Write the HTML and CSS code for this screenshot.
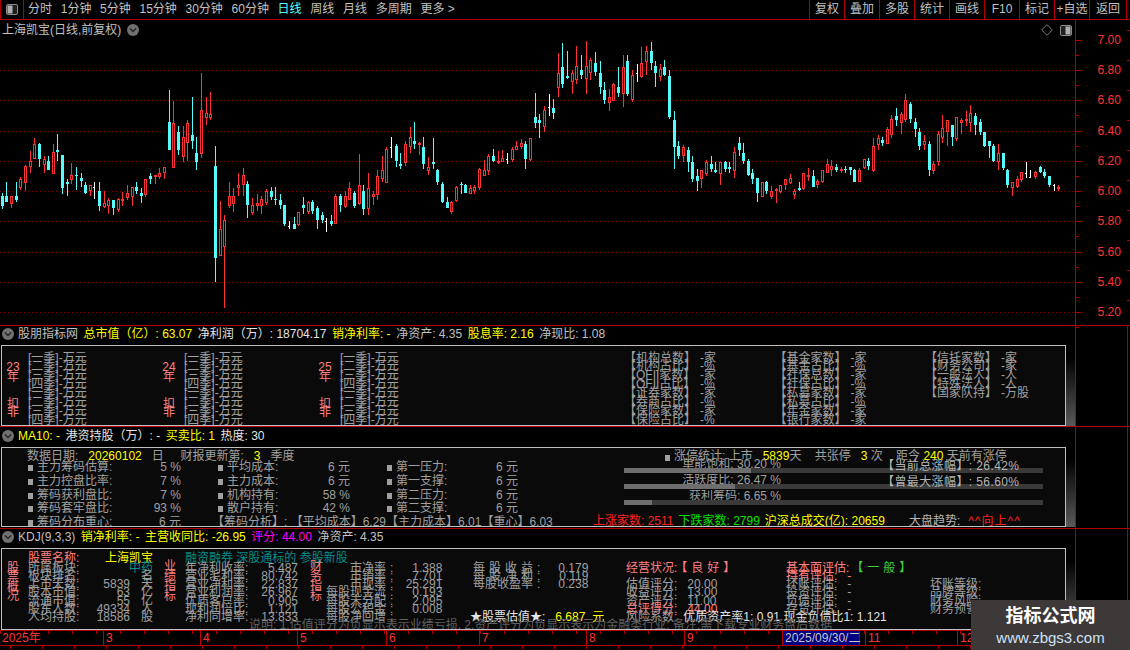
FILE: index.html
```html
<!DOCTYPE html>
<html lang="zh">
<head>
<meta charset="utf-8">
<title>上海凯宝</title>
<link rel="stylesheet" href="styles.css">
</head>
<body>
<div class="app">
  <header class="toolbar">
    <div class="toggle-cell">
      <svg class="toggle" viewBox="0 0 12 11"><rect class="toggle-frame" x="0.5" y="0.5" width="11" height="10" rx="1.5"/><rect class="toggle-half" x="1.5" y="1.5" width="5" height="8"/></svg>
    </div>
    <nav class="periods">
      <span>分时</span><span>1分钟</span><span>5分钟</span><span>15分钟</span><span>30分钟</span><span>60分钟</span><span class="is-active">日线</span><span>周线</span><span>月线</span><span>多周期</span><span>更多 &gt;</span>
    </nav>
    <nav class="tools">
      <span>复权</span><span>叠加</span><span>多股</span><span>统计</span><span>画线</span><span>F10</span><span>标记</span><span>+自选</span><span class="tool-last">返回</span>
    </nav>
  </header>

  <section class="pane pane-chart">
    <div class="chart">
      <div class="chart-title">上海凯宝(日线,前复权)
        <svg class="chev" viewBox="0 0 12 12"><circle class="chev-bg" cx="6" cy="6" r="6"/><path class="chev-mark" d="M3 4.5 6 7.5 9 4.5"/></svg>
      </div>
      <div class="chart-tools">
        <svg class="diamond" viewBox="0 0 12 12"><path d="M6 .7 11.3 6 6 11.3 .7 6Z"/></svg>
        <svg class="toggle" viewBox="0 0 12 11"><rect class="toggle-frame" x="0.5" y="0.5" width="11" height="10" rx="1.5"/><rect class="toggle-half" x="5.5" y="1.5" width="5" height="8"/></svg>
      </div>
      <svg id="candles" class="candles" width="1075" height="305" viewBox="0 0 1075 305">
        <g class="grid">
          <line x1="0" x2="1075" y1="50.5" y2="50.5"/><line x1="0" x2="1075" y1="80.5" y2="80.5"/><line x1="0" x2="1075" y1="111.5" y2="111.5"/><line x1="0" x2="1075" y1="141.5" y2="141.5"/><line x1="0" x2="1075" y1="171.5" y2="171.5"/><line x1="0" x2="1075" y1="201.5" y2="201.5"/><line x1="0" x2="1075" y1="232.5" y2="232.5"/><line x1="0" x2="1075" y1="262.5" y2="262.5"/><line x1="0" x2="1075" y1="292.5" y2="292.5"/>
        </g>
      </svg>
    </div>
    <div class="side price-axis">
      <div class="price">7.00</div><div class="price">6.80</div><div class="price">6.60</div><div class="price">6.40</div><div class="price">6.20</div><div class="price">6.00</div><div class="price">5.80</div><div class="price">5.60</div><div class="price">5.40</div><div class="price">5.20</div>
    </div>
  </section>

  <section class="pane pane-finance">
    <div class="pane-main">
      <div class="pane-head">
        <svg class="chev" viewBox="0 0 12 12"><circle class="chev-bg" cx="6" cy="6" r="6"/><path class="chev-mark" d="M3 4.5 6 7.5 9 4.5"/></svg>
        <span class="soft">股朋指标网</span><span class="yel">总市值（亿）: 63.07</span><span class="wht">净利润（万）: 18704.17</span><span class="yel">销净利率: -</span><span class="soft">净资产: 4.35</span><span class="yel">股息率: 2.16</span><span class="soft">净现比: 1.08</span>
      </div>
      <div class="panel-row">
        <div class="box box-finance">
          <div class="fin-group">
            <div class="fin-label"><span class="fin-year">23<br>年</span><span class="fin-net">扣<br>非</span></div>
            <div class="rows"><div>[一季]-万元</div><div>[二季]-万元</div><div>[三季]-万元</div><div>[四季]-万元</div><div>[一季]-万元</div><div>[二季]-万元</div><div>[三季]-万元</div><div>[四季]-万元</div></div>
          </div>
          <div class="fin-group">
            <div class="fin-label"><span class="fin-year">24<br>年</span><span class="fin-net">扣<br>非</span></div>
            <div class="rows"><div>[一季]-万元</div><div>[二季]-万元</div><div>[三季]-万元</div><div>[四季]-万元</div><div>[一季]-万元</div><div>[二季]-万元</div><div>[三季]-万元</div><div>[四季]-万元</div></div>
          </div>
          <div class="fin-group">
            <div class="fin-label"><span class="fin-year">25<br>年</span><span class="fin-net">扣<br>非</span></div>
            <div class="rows"><div>[一季]-万元</div><div>[二季]-万元</div><div>[三季]-万元</div><div>[四季]-万元</div><div>[一季]-万元</div><div>[二季]-万元</div><div>[三季]-万元</div><div>[四季]-万元</div></div>
          </div>
          <div class="holders holders-first">
            <div class="holder"><span>【机构总数】</span><span>-家</span></div><div class="holder"><span>【机构占比】</span><span>-%</span></div><div class="holder"><span>【QFII家数】</span><span>-家</span></div><div class="holder"><span>【QFII占比】</span><span>-%</span></div><div class="holder"><span>【证券家数】</span><span>-家</span></div><div class="holder"><span>【券商占比】</span><span>-%</span></div><div class="holder"><span>【保险家数】</span><span>-家</span></div><div class="holder"><span>【保险占比】</span><span>-%</span></div>
          </div>
          <div class="holders">
            <div class="holder"><span>【基金家数】</span><span>-家</span></div><div class="holder"><span>【基金占比】</span><span>-%</span></div><div class="holder"><span>【社保总数】</span><span>-家</span></div><div class="holder"><span>【社保占比】</span><span>-%</span></div><div class="holder"><span>【私募家数】</span><span>-家</span></div><div class="holder"><span>【私募占比】</span><span>-%</span></div><div class="holder"><span>【年金家数】</span><span>-家</span></div><div class="holder"><span>【银行家数】</span><span>-家</span></div>
          </div>
          <div class="holders">
            <div class="holder"><span>【信托家数】</span><span>-家</span></div><div class="holder"><span>【财务公司】</span><span>-家</span></div><div class="holder"><span>【一般法人】</span><span>-人</span></div><div class="holder"><span>【特殊法人】</span><span>-人</span></div><div class="holder"><span>【国家队持】</span><span>-万股</span></div>
          </div>
        </div>
        <div class="edge"></div>
      </div>
    </div>
    <div class="side side-lower"></div>
  </section>

  <section class="pane pane-chips">
    <div class="pane-main">
      <div class="pane-head">
        <svg class="chev" viewBox="0 0 12 12"><circle class="chev-bg" cx="6" cy="6" r="6"/><path class="chev-mark" d="M3 4.5 6 7.5 9 4.5"/></svg>
        <span class="yel">MA10: -</span><span class="wht">港资持股（万）: -</span><span class="yel">买卖比: 1</span><span class="wht">热度: 30</span>
      </div>
      <div class="panel-row">
        <div class="box box-chips">
          <div class="chips">
            <div class="chips-top">数据日期:   <b class="yel">20260102</b>   日     财报更新第:   <b class="yel">3</b>   季度</div>
            <div class="stats">
              <div class="stat"><span class="stat-name">主力筹码估算:</span><span>5 %</span></div>
              <div class="stat"><span class="stat-name">平均成本:</span><span>6 元</span></div>
              <div class="stat"><span class="stat-name">第一压力:</span><span>6 元</span></div>
              <div class="stat"><span class="stat-name">主力控盘比率:</span><span>7 %</span></div>
              <div class="stat"><span class="stat-name">主力成本:</span><span>6 元</span></div>
              <div class="stat"><span class="stat-name">第一支撑:</span><span>6 元</span></div>
              <div class="stat"><span class="stat-name">筹码获利盘比:</span><span>7 %</span></div>
              <div class="stat"><span class="stat-name">机构持有:</span><span>58 %</span></div>
              <div class="stat"><span class="stat-name">第二压力:</span><span>6 元</span></div>
              <div class="stat"><span class="stat-name">筹码套牢盘比:</span><span>93 %</span></div>
              <div class="stat"><span class="stat-name">散户持有:</span><span>42 %</span></div>
              <div class="stat"><span class="stat-name">第二支撑:</span><span>6 元</span></div>
              <div class="stat"><span class="stat-name">筹码分布重心:</span><span>6 元</span></div>
              <div class="analysis">【筹码分析】: 【平均成本】6.29【主力成本】6.01【重心】6.03</div>
            </div>
          </div>
          <div class="market">
            <div class="limit"><i class="dot"></i>涨停统计: 上市   <b class="yel">5839</b>天    共张停   <b class="yel">3</b> 次    距今 <b class="yel">240</b> 天前有涨停</div>
            <div class="meter"><div class="meter-label">单能饱和: 30.20 %</div><div class="bar"><div class="bar-fill" style="width:30.3%"></div></div></div>
            <div class="meter"><div class="meter-label">活跃度比: 26.47 %</div><div class="bar"><div class="bar-fill" style="width:26.5%"></div></div></div>
            <div class="meter"><div class="meter-label">获利筹码: 6.65 %</div><div class="bar"><div class="bar-fill" style="width:6.65%"></div></div></div>
            <div class="gain gain-now">【当前总涨幅】: 26.42%</div>
            <div class="gain gain-max">【曾最大涨幅】: 56.60%</div>
            <div class="breadth"><span class="up">上涨家数: 2511</span><span class="down">下跌家数: 2799</span><span class="yel">沪深总成交(亿): 20659</span><span class="trend">大盘趋势:</span><span class="up wide">^^向上^^</span></div>
          </div>
        </div>
        <div class="edge"></div>
      </div>
    </div>
    <div class="side side-lower"></div>
  </section>

  <section class="pane pane-profile">
    <div class="pane-main">
      <div class="pane-head head-low">
        <svg class="chev" viewBox="0 0 12 12"><circle class="chev-bg" cx="6" cy="6" r="6"/><path class="chev-mark" d="M3 4.5 6 7.5 9 4.5"/></svg>
        <span class="soft">KDJ(9,3,3)</span><span class="yel">销净利率: -</span><span class="yel">主营收同比: -26.95</span><span class="mag">评分: 44.00</span><span class="soft">净资产: 4.35</span>
      </div>
      <div class="panel-row">
        <div class="box box-profile">
          <div class="vlabel vlabel-a">股<br>票<br>概<br>况</div>
          <div class="col col-basic">
            <div class="col-head"><span class="pink">股票名称:</span><span class="yel">上海凯宝</span></div>
            <div class="r"><span>所属板块:</span><span class="teal">中药</span></div>
            <div class="r"><span>板块排名:</span><span class="unit">名</span></div>
            <div class="r"><span>上市天数:</span><span>5839</span><span class="unit">天</span></div>
            <div class="r"><span>股本市值:</span><span>63</span><span class="unit">亿</span></div>
            <div class="r"><span>流通市值:</span><span>55</span><span class="unit">亿</span></div>
            <div class="r"><span>股东人数:</span><span>49334</span><span class="unit">人</span></div>
            <div class="r"><span>人均持股:</span><span>18586</span><span class="unit">股</span></div>
          </div>
          <div class="vlabel vlabel-b">业<br>绩<br>指<br>标</div>
          <div class="col col-perf">
            <div class="col-head"><span class="teal tags">融资融券 深股通标的 参股新股</span></div>
            <div class="r"><span>年净利收率:</span><span>5.487</span></div>
            <div class="r"><span>营业毛利率:</span><span>80.742</span></div>
            <div class="r"><span>营业净利率:</span><span>22.837</span></div>
            <div class="r"><span>营业利润率:</span><span>26.967</span></div>
            <div class="r"><span>优质客户率:</span><span>0.905</span></div>
            <div class="r"><span>现利润倍比:</span><span>1.121</span></div>
            <div class="r"><span>净利同增率:</span><span>13.833</span></div>
          </div>
          <div class="vlabel vlabel-c">财<br>务<br>指<br>标</div>
          <div class="col col-value">
            <div class="col-head"></div>
            <div class="r"><span class="rk">市净率</span><span>:</span><span class="rv">1.388</span></div>
            <div class="r"><span class="rk">市销率</span><span>:</span><span class="rv">7.701</span></div>
            <div class="r"><span class="rk">市现率</span><span>:</span><span class="rv">25.291</span></div>
            <div class="r"><span class="rk">每股现金流</span><span>:</span><span class="rv">0.193</span></div>
            <div class="r"><span class="rk">每股未分配</span><span>:</span><span class="rv">2.095</span></div>
            <div class="r"><span class="rk">每股公积金</span><span>:</span><span class="rv">0.008</span></div>
            <div class="r"><span class="rk">每股净回增</span><span>:</span></div>
          </div>
          <div class="col col-share">
            <div class="col-head"></div>
            <div class="r"><span class="rk rk-just">每股收益</span><span>:</span><span class="rv">0.179</span></div>
            <div class="r"><span class="rk rk-just">每股净利</span><span>:</span><span class="rv">0.119</span></div>
            <div class="r"><span class="rk">每股收盈率</span><span>:</span><span class="rv">0.238</span></div>
            <div class="r"></div><div class="r"></div><div class="r"></div>
            <div class="r worth"><span class="wht">★股票估值★:</span><span class="yel rv">6.687</span><span class="yel worth-unit">元</span></div>
          </div>
          <div class="col col-state">
            <div class="col-head"></div>
            <div class="r"><span class="pink">经营状况:</span><span class="pink tag-after">【良好】</span></div>
            <div class="r"></div>
            <div class="r"><span>估值评分:</span><span class="score">20.00</span></div>
            <div class="r"><span>收益评分:</span><span class="score">13.00</span></div>
            <div class="r"><span>资产评分:</span><span class="score">11.00</span></div>
            <div class="r pink"><span>总评得分:</span><span class="score">44.00</span></div>
            <div class="r"><span>风险系数:</span><span class="wht ratio">优质资产率1: 0.91 现金负债比1: 1.121</span></div>
          </div>
          <div class="col col-base">
            <div class="col-head"></div>
            <div class="r"><span class="pink">基本面评估:</span><span class="green tag-after">【一般】</span></div>
            <div class="r pink"><span>持有评估:</span><span class="score">-</span></div>
            <div class="r"><span>坏账评估:</span><span class="score">-</span></div>
            <div class="r"><span>投资评估:</span><span class="score">-</span></div>
            <div class="r"><span>负债评估:</span><span class="score">-</span></div>
            <div class="r"><span>存货评估:</span><span class="score">-</span></div>
          </div>
          <div class="col col-grade">
            <div class="col-head"></div>
            <div class="r"></div><div class="r"></div>
            <div class="r"><span>坏账等级:</span></div>
            <div class="r"><span>品牌等级:</span></div>
            <div class="r"><span>财务风险:</span></div>
            <div class="r"><span>财务预警:</span></div>
          </div>
          <div class="note">说明: 1.估值评分为负显示表示业绩亏损, 2.资产评分为负显示表示为金融类行业; 备注:需下载专业财务盘后数据</div>
        </div>
        <div class="edge"></div>
      </div>
    </div>
    <div class="side side-lower"></div>
  </section>

  <footer class="time-row">
    <div class="time-axis">
      <span class="t t-year">2025年</span><span class="t t-3">3</span><span class="t t-4">4</span><span class="t t-5">5</span><span class="t t-6">6</span><span class="t t-7">7</span><span class="t t-8">8</span><span class="t t-9">9</span><span class="t t-date">2025/09/30/二</span><span class="t t-11">11</span><span class="t t-12">12</span>
    </div>
    <div class="side side-time"></div>
  </footer>
  <div class="tail"></div>

  <aside class="watermark">
    <div class="wm-name">指标公式网</div>
    <div class="wm-url">www.zbgs3.com</div>
  </aside>
</div>
<script src="chart.js"></script>
</body>
</html>
```

FILE: styles.css
```css
* { box-sizing: border-box; }
html, body { margin: 0; padding: 0; background: #000; }
body { overflow: hidden; }
.app {
  position: relative;
  width: 1130px;
  height: 650px;
  overflow: hidden;
  display: flex;
  flex-direction: column;
  background: #000;
  color: #c0c0c0;
  font: 12px/14px "Liberation Sans", "Noto Sans CJK SC", sans-serif;
  white-space: nowrap;
}
b { font-weight: normal; }
.yel { color: #ffff00; }
.wht { color: #e4e4e4; }
.soft { color: #c0c0c0; }
.mag { color: #ff00ff; }
.pink { color: #ff8080; }
.teal { color: #008c8c; }
.green { color: #40d040; }
.up { color: #ff2020; }
.down { color: #00e000; }

/* toolbar */
.toolbar {
  flex: none;
  height: 20px;
  display: flex;
  border-bottom: 1px solid #b00000;
}
.toggle-cell {
  width: 24px;
  border-left: 1px solid #b00000;
  border-right: 1px solid #b00000;
  display: flex;
  align-items: center;
  justify-content: center;
  padding-bottom: 1px;
}
.toggle { width: 12px; height: 11px; display: block; }
.toggle-frame { fill: #202020; stroke: #8a8a8a; }
.toggle-half { fill: #b0b0b0; }
.periods {
  display: flex;
  gap: 8.7px;
  padding-left: 4px;
  line-height: 19px;
}
.is-active { color: #55ffff; }
.tools {
  margin-left: auto;
  display: flex;
  margin-right: 3px;
  border-right: 1px solid #b00000;
}
.tools span {
  width: 35px;
  text-align: center;
  line-height: 19px;
  border-left: 1px solid #b00000;
}
.tools .tool-last { width: 37px; }

/* panes */
.pane { flex: none; display: flex; border-bottom: 1px solid #b00000; }
.pane-chart { height: 306px; }
.pane-finance { height: 101px; }
.pane-chips { height: 102px; }
.pane-profile { height: 102px; }
.pane-main { width: 1075px; flex: none; }
.side {
  flex: 1;
  border-left: 1px solid #b00000;
  background: linear-gradient(#b00000 1px, transparent 1px) right 10px / 3px 30px repeat-y;
}
.side-lower {
  margin-right: 2px;
  border-right: 1px solid #b00000;
  background: none;
}

.chart { position: relative; width: 1075px; flex: none; }
.candles { display: block; }
.grid line { stroke: #800000; stroke-width: 1; stroke-dasharray: 1 3; }
.k-c { fill: #54fcfc; }
.k-r { fill: #ff3232; }
.k-w { fill: #fff; }
.k-rb { fill: #000; stroke: #ff3232; stroke-width: 1; }
.chart-title {
  position: absolute;
  left: 2px;
  top: 3px;
  display: flex;
  align-items: center;
  gap: 6px;
}
.chev { width: 12px; height: 12px; flex: none; display: block; }
.chev-bg { fill: #707070; }
.chev-mark { fill: none; stroke: #262626; stroke-width: 1.5; }
.chart-tools {
  position: absolute;
  right: 3px;
  top: 4px;
  display: flex;
  align-items: center;
  gap: 7px;
}
.diamond { width: 12px; height: 12px; display: block; }
.diamond path { fill: none; stroke: #777; }

.price-axis { padding-top: 4.9px; }
.price {
  position: relative;
  height: 30.25px;
  line-height: 30.25px;
  padding-left: 21.5px;
  color: #ff3232;
}
.price::before, .price::after {
  content: "";
  position: absolute;
  left: 0;
  height: 1px;
  background: #b00000;
}
.price::before { top: 15px; width: 5px; }
.price::after { top: 30px; width: 3px; }

.pane-head {
  height: 19px;
  display: flex;
  gap: 5.5px;
  padding: 1px 0 0 2px;
  align-items: flex-start;
}
.pane-head .chev { margin: 1px -1.5px 0 0; }
.pane-chips .pane-head { height: 20px; padding-top: 2px; }
.panel-row { display: flex; padding-left: 1px; }
.box {
  position: relative;
  width: 1065px;
  height: 81px;
  border: 1px solid #c0c0c0;
  background: #0a0a0a;
  color: #a0a0a0;
  overflow: hidden;
  display: flex;
}
.pane-chips .box { height: 80px; }
.pane-profile .box { height: 82px; }
.edge {
  width: 9px;
  background: linear-gradient(#000 15%, #5a5a5a 100%);
}

/* finance box */
.box-finance { padding: 7.5px 0 0 4px; }
.fin-group { width: 156px; flex: none; display: flex; }
.fin-label {
  width: 22px;
  flex: none;
  color: #ff8080;
  line-height: 10px;
  display: flex;
  flex-direction: column;
}
.fin-year, .fin-net { display: block; width: 14px; text-align: center; }
.fin-year { margin-top: 8.5px; }
.fin-net { margin-top: 18px; line-height: 8px; }
.rows > div { height: 8.9px; line-height: 8.9px; }
.holders { width: 150.5px; flex: none; }
.holders-first { margin-left: 150px; }
.holder { display: flex; height: 8.9px; line-height: 8.9px; }
.holder span:first-child { width: 76px; flex: none; }

/* chips box */
.chips { width: 590px; flex: none; padding: 2px 0 0 25px; }
.chips-top { height: 12px; line-height: 12px; white-space: pre; }
.stats {
  display: grid;
  grid-template-columns: 153px 132px 131px;
  column-gap: 37px;
  grid-auto-rows: 13.65px;
  margin-top: -0.6px;
  margin-left: 1px;
  line-height: 13.65px;
}
.stat { display: flex; align-items: center; }
.stat::before, .dot {
  content: "";
  display: inline-block;
  flex: none;
  width: 5px;
  height: 6px;
  margin-right: 4px;
  background: #a0a0a0;
}
.stat-name { flex: 1; }
.analysis { grid-column: span 2; margin-left: -6px; }
.market { position: relative; flex: 1; padding-top: 2px; }
.limit { height: 12px; line-height: 12px; padding-left: 73px; white-space: pre; }
.limit .dot { vertical-align: -1px; }
.meter { width: 419px; margin-left: 32px; height: 16.2px; }
.limit + .meter { margin-top: -4px; }
.meter-label {
  width: 157px;
  height: 9.6px;
  overflow: hidden;
  line-height: 12px;
  text-align: right;
}
.bar { height: 5.5px; background: #3a3a3a; }
.bar-fill { height: 100%; background: #6e6e6e; }
.gain { position: absolute; left: 290px; line-height: 14px; color: #b4b4b4; letter-spacing: 0.4px; }
.gain-now { top: 11px; }
.gain-max { top: 27px; }
.breadth {
  display: flex;
  gap: 5px;
  padding-left: 1px;
  margin-top: 7.4px;
  line-height: 14px;
}
.trend { margin-left: 19px; color: #b4b4b4; }
.wide { margin-left: 3px; letter-spacing: 1px; }

/* profile box */
.box-profile { padding: 2.5px 0 0 0; }
.vlabel {
  flex: none;
  padding-top: 12px;
  line-height: 9.5px;
  color: #ff8080;
}
.vlabel-a { width: 26px; padding-left: 5px; }
.vlabel-b { width: 21px; padding-top: 9.5px; line-height: 10px; }
.vlabel-c { width: 16px; padding-top: 9.5px; line-height: 10px; }
.col { flex: none; }
.col-head { height: 12.4px; line-height: 12px; display: flex; justify-content: space-between; }
.r { display: flex; height: 8.2px; line-height: 8.2px; }
.col-basic { width: 125px; margin-right: 11px; }
.col-basic .r > :first-child { margin-right: auto; }
.unit { width: 12px; margin-left: 11px; }
.col-perf { width: 113px; margin-right: 12px; }
.col-perf .r { justify-content: space-between; }
.col-value { width: 147px; }
.col-share { width: 153px; }
.rk { width: 60px; text-align: right; margin-right: 4px; }
.rk-just { text-align: justify; text-align-last: justify; }
.col-value .rv { width: 49px; text-align: right; }
.col-share .rv { width: 48px; text-align: right; }
.worth { margin-left: -3px; }
.worth .rv { margin-left: 10px; width: 30px; }
.worth-unit { margin-left: 7px; }
.col-state { width: 160px; }
.col-base { width: 144px; }
.tag-after { margin-left: -2px; letter-spacing: 4px; }
.score { margin-left: 10px; }
.ratio { margin-left: 6px; }
.col-base .tag-after { margin-left: 2px; }
.note {
  position: absolute;
  left: 247px;
  top: 69px;
  line-height: 14px;
  color: #606060;
}

/* time axis */
.time-row { flex: none; height: 15px; display: flex; border-bottom: 1px solid #b00000; }
.time-axis {
  width: 1075px;
  flex: none;
  display: grid;
  grid-template-columns: 103px 97px 97px 89px 93px 107px 98px 98px 78px 5px 92px 1fr;
  grid-template-rows: 14px;
  line-height: 14px;
  color: #ff3232;
  background: linear-gradient(90deg, #b00000 1px, transparent 1px) 0 0 / 24px 3px repeat-x;
}
.t { padding-left: 2px; border-left: 1px solid #c00000; }
.t-year { padding-left: 2px; border-left: 0; }
.t-date {
  grid-column: 9 / 11;
  background: #000080;
  color: #c8c8c8;
  border: 1px solid #b00000;
  border-top: 0;
  border-bottom: 0;
  padding-left: 2px;
  margin-right: 5px;
}
.t-11 { grid-column: 11; }
.side-time { margin-right: 2px; border-right: 1px solid #b00000; background: none; }
.tail {
  flex: 1;
  background: linear-gradient(90deg, #b00000 1px, transparent 1px) 10px 0 / 32px 3px repeat-x;
}

/* watermark */
.watermark {
  position: absolute;
  left: 971px;
  top: 600px;
  width: 159px;
  height: 50px;
  background: #3d3939;
  text-align: center;
}
.wm-name {
  margin-top: 6px;
  font-size: 18px;
  line-height: 20px;
  font-weight: 700;
  color: #fff;
}
.wm-url {
  margin-top: 2px;
  font-size: 15px;
  line-height: 20px;
  color: #cfe2f5;
}
```

FILE: chart.js
```js
// Candles as: type, x, wick top, wick bottom, body top, body bottom
// measured at 3x from the chart; each block has its own origin.
var blocks = [
  { x0: 0, y0: 40, s: "c7,460,507,468,498 c19,427,486,468,486 r34,468,503,469,491 c49,427,486,468,480 r61,411,450,417,444 r76,376,454,379,428 r91,334,399,364,381 r103,294,358,313,356 c118,309,381,312,356 r133,349,399,358,374 c145,348,390,363,390 r160,312,402,337,401 c172,282,363,330,336 c187,345,462,345,444 c202,418,468,426,432 r214,369,432,405,419 c229,381,450,405,408 c244,400,441,414,423 c256,427,462,435,459 r271,435,468,436,452 w283,427,477,442,444 c298,427,513,453,498 r313,454,504,490,501 r325,474,522,481,497 c340,480,525,480,504 r355,474,516,478,510 r367,456,498,477,483 r382,435,480,460,473 r397,441,498,442,470 c409,426,462,442,453 c424,444,489,459,468 r436,417,471,418,464 c451,400,432,408,417 r466,405,432,405,411 r478,384,417,400,411 r493,381,417,382,400 c508,151,330,246,330 r520,183,384,250,383 c535,258,345,276,330 r550,258,366,291,350 r562,240,363,250,310 c577,171,327,285,303 c589,291,390,339,366 r604,99,354,211,341 r619,171,255,220,234 r631,156,240,222,234 c646,318,726,378,654 r661,483,648,568,647 r673,525,804,541,620 r688,426,504,468,498 r700,444,516,468,491 r715,399,468,435,444 r730,384,468,406,434 c742,423,534,432,495 r757,474,525,496,519 r772,462,513,490,497 r784,468,522,477,497 r799,447,495,453,488 c814,441,480,453,471 c826,441,495,477,480 c841,462,507,480,495 c853,495,558,495,552 w868,543,567,559,561 c883,531,567,552,567 r895,516,558,517,555 c910,471,522,495,504 r925,483,522,487,516 c937,480,522,486,513 c952,498,567,504,540 c967,516,549,525,540 w979,534,576,544,546 c994,525,558,543,552 r1006,462,552,468,551 c1021,462,516,468,495 r1036,453,504,468,500 r1048,426,480,445,479 c1063,453,504,459,498 r1078,342,495,435,492 c1090,435,525,453,507 r1105,399,525,445,506" },
  { x0: 370, y0: 30, s: "r10,484,525,492,500 r22,420,510,438,495 r37,378,456,420,446 r49,352,459,358,458 w64,321,384,352,354 c79,342,411,348,393 c91,369,417,402,408 r106,333,408,342,399 r121,291,369,321,350 c133,276,357,333,342 r148,336,375,339,345 c160,321,417,351,402 r175,381,435,411,423 c190,324,417,396,402 c202,417,465,420,456 c217,456,519,462,516 c232,501,534,516,534 r244,513,552,516,546 r259,468,516,471,513 c274,456,492,462,465 c286,462,489,465,489 r301,465,492,474,491 r313,465,492,471,483 r328,414,480,417,473 r343,390,438,420,437 r355,372,435,378,423 c370,357,396,378,393 r385,363,402,393,399 r397,360,396,385,395 w412,369,402,387,389 r427,351,396,357,390 r439,333,360,348,359 r454,327,357,339,351 c466,333,417,342,387 r481,324,393,325,390 c496,189,294,261,279 c508,252,324,270,279 r523,228,306,240,291 w538,192,258,231,233 c550,207,267,234,249 r565,69,201,129,173 c577,39,174,111,162 c592,63,147,138,144 r607,120,192,129,155 r619,48,162,109,150 c634,75,147,120,135 r649,33,192,109,147 r661,84,150,90,128 c676,66,138,99,126 c691,93,192,129,171 c703,156,222,180,210 r718,178,243,202,219 r730,159,213,162,213 c745,111,201,171,189 r760,75,231,111,192 c772,75,198,93,192 r787,120,216,135,210 w802,102,156,129,131 r814,51,144,99,141 r829,48,135,63,95 c844,36,120,63,99 c856,93,171,108,129 r871,102,153,117,141 c883,90,138,111,135 c898,120,267,138,261 c913,243,417,270,351 c925,333,387,348,378 r940,345,396,351,378 c955,351,426,360,396 c967,378,456,396,447 c982,417,483,438,453 r994,420,474,420,447 r1009,390,438,396,432 c1024,378,426,402,417 c1036,396,429,420,426 r1051,396,465,396,432 c1066,393,426,396,417 c1078,396,429,411,417 r1093,351,444,366,423 c1108,321,378,339,360" },
  { x0: 740, y0: 30, s: "c10,339,402,369,393 c25,387,438,393,435 c37,417,462,429,447 c52,444,516,444,489 r67,456,501,456,500 c79,453,492,456,483 r94,468,507,483,501 r109,474,519,476,483 r121,465,489,465,486 r136,447,480,447,465 r151,432,462,444,459 r163,477,507,483,495 c178,456,483,474,480 r190,429,480,429,477 r205,414,453,435,441 c220,420,471,438,471 r232,447,474,453,465 r247,420,459,420,456 r262,387,429,402,429 r274,390,438,408,420 c289,402,426,411,420 r304,411,429,417,423 c316,408,429,417,420 c331,411,435,411,420 c343,417,456,420,456 r358,414,456,420,456 r373,387,417,387,414 c385,384,420,393,408 r400,324,426,348,423 r415,315,360,324,345 c427,321,348,330,339 r442,291,342,297,342 r454,255,324,267,315 c469,234,288,258,270 r484,246,312,252,279 r496,192,276,210,270 c511,216,279,222,267 c526,264,321,276,297 c538,294,360,306,348 r553,315,360,333,345 c568,333,438,342,420 r580,393,432,402,423 r595,303,408,312,396 r607,255,339,294,324 r622,270,348,270,306 c637,285,348,285,321 r649,261,333,261,327 r664,264,312,270,279 r679,243,288,267,273 r691,225,306,249,279 c706,249,315,258,285 c721,267,315,276,306 c733,306,351,306,348 c748,333,384,333,348 c760,342,396,348,393 r775,342,420,369,396 c790,369,420,369,414 c802,417,474,420,465 r817,456,498,456,474 r832,438,474,447,471 r844,426,456,426,450 w859,396,444,429,431 w871,420,444,440,442 r886,423,447,426,441 c901,408,429,411,426 c913,417,444,426,438 c928,438,471,438,465 w943,462,483,465,467 r955,465,483,471,477" }
];
var TOP = 20, out = "";
function rect(cls, x, y, w, h) {
  out += '<rect class="' + cls + '" x="' + x + '" y="' + y + '" width="' + w + '" height="' + h + '"/>';
}
blocks.forEach(function (b) {
  b.s.split(" ").forEach(function (item) {
    var t = item[0], v = item.slice(1).split(",").map(Number);
    var x = Math.floor(b.x0 + v[0] / 3);
    function py(n) { return Math.round(b.y0 + n / 3) - TOP; }
    var hi = py(v[1]), lo = py(v[2]), bt = py(v[3]), bb = py(v[4]);
    var h = Math.max(bb - bt, 1);
    rect("k-" + t, x, hi, 1, lo - hi);
    if (t === "c") rect("k-c", x - 1, bt, 3, h);
    else if (t === "r") rect("k-rb", x - 0.5, bt + 0.5, 2, Math.max(h - 1, 1));
    else rect("k-w", x - 1, bt, 1, 1);
  });
});
var svg = document.getElementById("candles");
svg.insertAdjacentHTML("beforeend", out);
```
